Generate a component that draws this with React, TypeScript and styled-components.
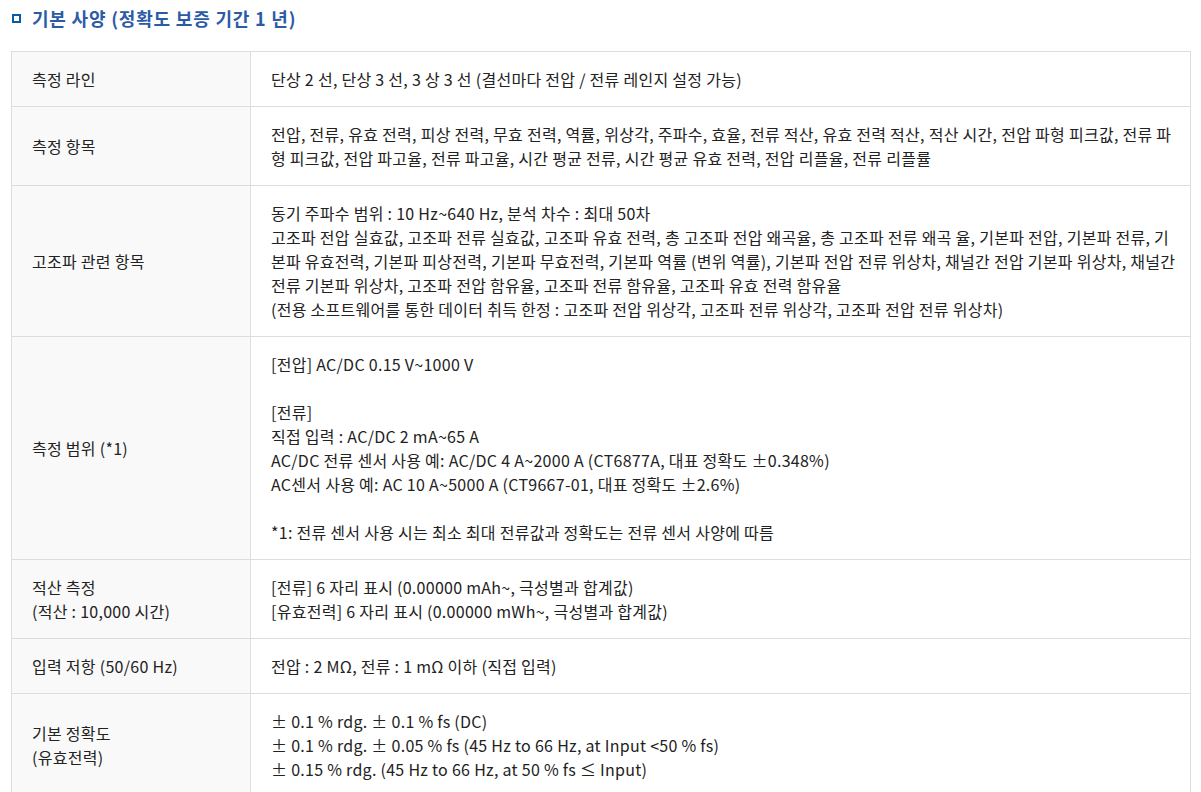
import styled, {createGlobalStyle} from "styled-components";

const GlobalStyle = createGlobalStyle`
  body {
    margin: 0;
    background: #fff;
    font-family: "Noto Sans CJK KR", "Noto Sans", sans-serif;
    color: #333;
  }
`

const Page = styled.div`
  padding: 5px 10px 0 11px;
`

const Title = styled.h3`
  display: flex;
  align-items: center;
  gap: 11px;
  margin: 0;
  height: 26px;
  font-size: 18px;
  font-weight: 700;
  color: #2c5ba6;
  letter-spacing: 0.8px;
`

const TitleMark = styled.span`
  flex-shrink: 0;
  width: 9px;
  height: 9px;
  box-sizing: border-box;
  border: 2.5px solid #0b5aa6;
  margin-left: 1px;
  margin-top: 1px;
`

const SpecTable = styled.table`
  width: 1180px;
  margin-top: 20px;
  border-collapse: collapse;
  table-layout: fixed;
  font-size: 16px;
  line-height: 24px;
  letter-spacing: 0.28px;
  color: #222;
`

const Label = styled.th`
  width: 198px;
  padding: 15px 20px 15px 20px;
  text-align: left;
  font-weight: 400;
  background: #f9f9f9;
  border: 1px solid #ddd;
  vertical-align: middle;
`

const Value = styled.td`
  padding: 15px 12px 15px 20px;
  border: 1px solid #ddd;
  vertical-align: middle;
  word-break: break-all;
`

const Line = styled.div<{ $blank?: boolean }>`
  min-height: ${p => (p.$blank ? "24px" : "0")};
`

type Row = { label: string[]; lines: string[] };

const rows: Row[] = [
  {
    label: ["측정 라인"],
    lines: ["단상 2 선, 단상 3 선, 3 상 3 선 (결선마다 전압 / 전류 레인지 설정 가능)"],
  },
  {
    label: ["측정 항목"],
    lines: [
      "전압, 전류, 유효 전력, 피상 전력, 무효 전력, 역률, 위상각, 주파수, 효율, 전류 적산, 유효 전력 적산, 적산 시간, 전압 파형 피크값, 전류 파형 피크값, 전압 파고율, 전류 파고율, 시간 평균 전류, 시간 평균 유효 전력, 전압 리플율, 전류 리플률",
    ],
  },
  {
    label: ["고조파 관련 항목"],
    lines: [
      "동기 주파수 범위 : 10 Hz~640 Hz, 분석 차수 : 최대 50차",
      "고조파 전압 실효값, 고조파 전류 실효값, 고조파 유효 전력, 총 고조파 전압 왜곡율, 총 고조파 전류 왜곡 율, 기본파 전압, 기본파 전류, 기본파 유효전력, 기본파 피상전력, 기본파 무효전력, 기본파 역률 (변위 역률), 기본파 전압 전류 위상차, 채널간 전압 기본파 위상차, 채널간 전류 기본파 위상차, 고조파 전압 함유율, 고조파 전류 함유율, 고조파 유효 전력 함유율",
      "(전용 소프트웨어를 통한 데이터 취득 한정 : 고조파 전압 위상각, 고조파 전류 위상각, 고조파 전압 전류 위상차)",
    ],
  },
  {
    label: ["측정 범위 (*1)"],
    lines: [
      "[전압] AC/DC 0.15 V~1000 V",
      "",
      "[전류]",
      "직접 입력 : AC/DC 2 mA~65 A",
      "AC/DC 전류 센서 사용 예: AC/DC 4 A~2000 A (CT6877A, 대표 정확도 ±0.348%)",
      "AC센서 사용 예: AC 10 A~5000 A (CT9667-01, 대표 정확도 ±2.6%)",
      "",
      "*1: 전류 센서 사용 시는 최소 최대 전류값과 정확도는 전류 센서 사양에 따름",
    ],
  },
  {
    label: ["적산 측정", "(적산 : 10,000 시간)"],
    lines: [
      "[전류] 6 자리 표시 (0.00000 mAh~, 극성별과 합계값)",
      "[유효전력] 6 자리 표시 (0.00000 mWh~, 극성별과 합계값)",
    ],
  },
  {
    label: ["입력 저항 (50/60 Hz)"],
    lines: ["전압 : 2 MΩ, 전류 : 1 mΩ 이하 (직접 입력)"],
  },
  {
    label: ["기본 정확도", "(유효전력)"],
    lines: [
      "± 0.1 % rdg. ± 0.1 % fs (DC)",
      "± 0.1 % rdg. ± 0.05 % fs (45 Hz to 66 Hz, at Input <50 % fs)",
      "± 0.15 % rdg. (45 Hz to 66 Hz, at 50 % fs ≤ Input)",
    ],
  },
];

const App = () => {
  return (
    <>
      <GlobalStyle />
      <Page>
        <Title>
          <TitleMark />
          기본 사양 (정확도 보증 기간 1 년)
        </Title>
        <SpecTable>
          <tbody>
            {rows.map((row, i) => (
              <tr key={i}>
                <Label>
                  {row.label.map((l, j) => (
                    <Line key={j}>{l}</Line>
                  ))}
                </Label>
                <Value>
                  {row.lines.map((l, j) => (
                    <Line key={j} $blank={l === ""}>{l}</Line>
                  ))}
                </Value>
              </tr>
            ))}
          </tbody>
        </SpecTable>
      </Page>
    </>
  );
}

export default App;
